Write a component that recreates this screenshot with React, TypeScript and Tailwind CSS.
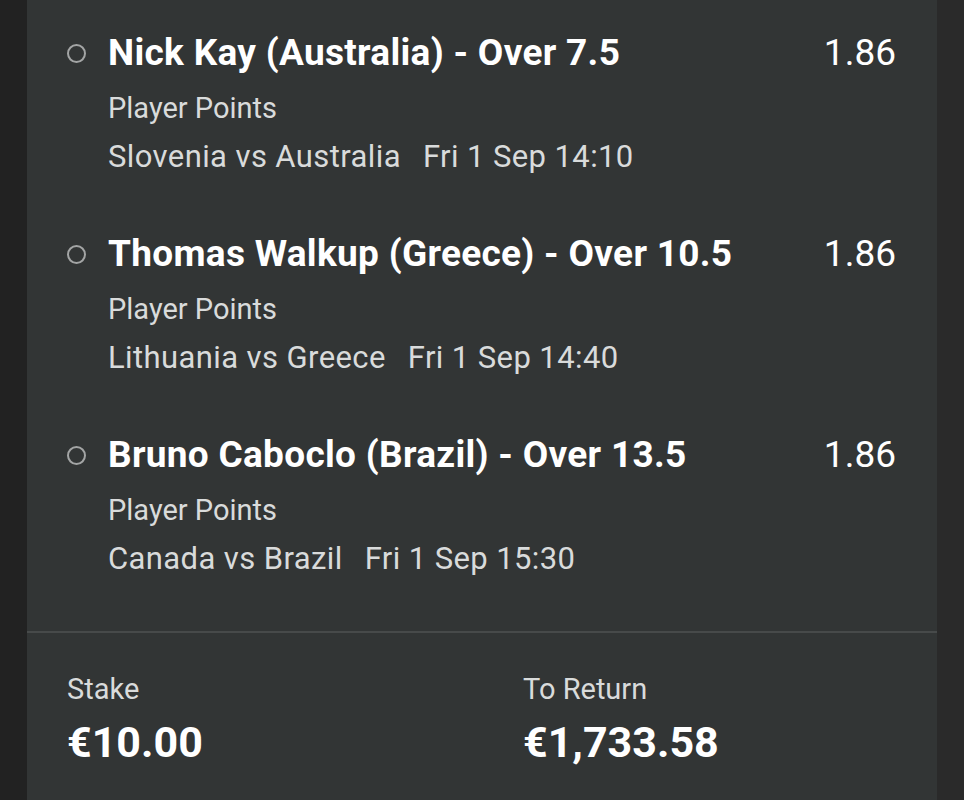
const selections = [
  {
    title: "Nick Kay (Australia) - Over 7.5",
    market: "Player Points",
    match: "Slovenia vs Australia",
    time: "Fri 1 Sep 14:10",
    odds: "1.86",
  },
  {
    title: "Thomas Walkup (Greece) - Over 10.5",
    market: "Player Points",
    match: "Lithuania vs Greece",
    time: "Fri 1 Sep 14:40",
    odds: "1.86",
  },
  {
    title: "Bruno Caboclo (Brazil) - Over 13.5",
    market: "Player Points",
    match: "Canada vs Brazil",
    time: "Fri 1 Sep 15:30",
    odds: "1.86",
  },
];

function Selection({ s }: { s: (typeof selections)[number] }) {
  return (
    <div className="flex pb-[45px]">
      <div className="w-[81px] shrink-0 flex justify-end pr-[22px] pt-[19px]">
        <div className="w-[19px] h-[19px] rounded-full border-[2.5px] border-[#a3a5a5]" />
      </div>
      <div className="flex-1 min-w-0">
        <div className="flex justify-between h-[56px] items-center">
          <span className="text-[37px] font-bold text-white tracking-[0.3px] whitespace-nowrap">{s.title}</span>
          <span className="text-[37px] text-white pr-[41px]">{s.odds}</span>
        </div>
        <div className="mt-[4px] h-[48px] flex items-center text-[29px] text-[#d9dbdb]">{s.market}</div>
        <div className="h-[48px] flex items-center text-[31px] text-[#d9dbdb] tracking-[0.4px] gap-[22px]">
          <span>{s.match}</span>
          <span>{s.time}</span>
        </div>
      </div>
    </div>
  );
}

export default function App() {
  return (
    <div
      className="flex h-[800px] w-[964px] overflow-hidden bg-[#222222]"
      style={{ fontFamily: "Roboto, 'Liberation Sans', sans-serif" }}
    >
      <div className="w-[27px] shrink-0 bg-[#222222]" />
      <div className="w-[910px] shrink-0 bg-[#323535] flex flex-col">
        <div className="pt-[25px] pb-[3px]">
          {selections.map((s) => (
            <Selection key={s.title} s={s} />
          ))}
        </div>
        <div className="h-[2px] bg-[#474a4a]" />
        <div className="flex pl-[40px] pt-[37px]">
          <div className="w-[456px]">
            <div className="h-[40px] flex items-center text-[29px] text-[#d9dbdb]">Stake</div>
            <div className="h-[64px] flex items-center text-[43px] font-bold text-white">€10.00</div>
          </div>
          <div>
            <div className="h-[40px] flex items-center text-[29px] text-[#d9dbdb]">To Return</div>
            <div className="h-[64px] flex items-center text-[43px] font-bold text-white">€1,733.58</div>
          </div>
        </div>
      </div>
      <div className="flex-1 bg-[#2a2a2a]" />
    </div>
  );
}
